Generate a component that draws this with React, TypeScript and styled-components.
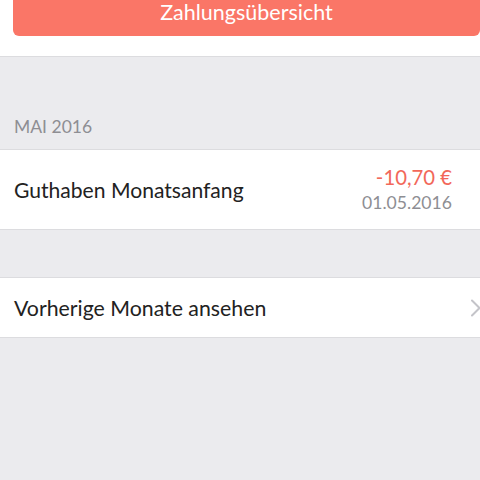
import React from "react"
import styled, { createGlobalStyle } from "styled-components"

const GlobalStyle = createGlobalStyle`
  html, body {
    margin: 0;
    padding: 0;
    background: #ebebee;
    font-family: Lato, "Open Sans", sans-serif;
    -webkit-font-smoothing: antialiased;
  }
`

const entries = [
  { id: 1, title: "Guthaben Monatsanfang", amount: "-10,70 €", date: "01.05.2016" },
]

const Chevron: React.FC = () => (
  <svg width="12" height="18" viewBox="0 0 12 18" fill="none">
    <path d="M2 1.5 L9.5 9 L2 16.5" stroke="#c4c4c9" strokeWidth="2" strokeLinecap="round" strokeLinejoin="round" />
  </svg>
)

export default function App() {
  return (
    <S.Page>
      <GlobalStyle />
      <S.TopSection>
        <S.Button>Zahlungsübersicht</S.Button>
      </S.TopSection>

      <S.SectionHeader>MAI 2016</S.SectionHeader>
      <S.Group>
        {entries.map((e) => (
          <S.Row key={e.id} tall>
            <S.Label>{e.title}</S.Label>
            <S.Values>
              <S.Amount>{e.amount}</S.Amount>
              <S.Date>{e.date}</S.Date>
            </S.Values>
          </S.Row>
        ))}
      </S.Group>

      <S.Spacer />
      <S.Group>
        <S.Row>
          <S.Label wide>Vorherige Monate ansehen</S.Label>
          <S.ChevronWrap>
            <Chevron />
          </S.ChevronWrap>
        </S.Row>
      </S.Group>
    </S.Page>
  )
}

const S = {
  Page: styled.div`
    min-height: 480px;
    background: #ebebee;
    display: flex;
    flex-direction: column;
  `,

  TopSection: styled.div`
    height: 56px;
    background: #fff;
    border-bottom: 1px solid #dcdcdf;
    padding: 0 0 0 13px;
    box-sizing: content-box;
  `,

  Button: styled.div`
    height: 36px;
    background: #fa7667;
    border-radius: 0 0 6px 6px;
    color: #fff;
    font-size: 21.5px;
    display: flex;
    align-items: flex-end;
    justify-content: center;
    padding-bottom: 13px;
    box-sizing: border-box;
    line-height: 22px;
  `,

  SectionHeader: styled.div`
    padding: 60px 14px 12px;
    height: 20px;
    line-height: 20px;
    font-size: 17.5px;
    color: #8e8e93;
  `,

  Group: styled.div`
    background: #fff;
    border-top: 1px solid #dcdcdf;
    border-bottom: 1px solid #dcdcdf;
  `,

  Row: styled.div<{ tall?: boolean }>`
    height: ${(p) => (p.tall ? "79px" : "59px")};
    display: flex;
    align-items: center;
    justify-content: space-between;
    padding: 0 0 0 14px;
  `,

  Label: styled.div<{ wide?: boolean }>`
    font-size: ${(p) => (p.wide ? "21.3px" : "21.1px")};
    color: #222;
  `,

  Values: styled.div`
    display: flex;
    flex-direction: column;
    align-items: flex-end;
    padding-right: 28px;
    gap: 6px;
  `,

  Amount: styled.div`
    font-size: 20.3px;
    line-height: 19px;
    color: #f2685a;
  `,

  Date: styled.div`
    font-size: 17.6px;
    line-height: 19px;
    color: #8e8e93;
  `,

  ChevronWrap: styled.div`
    display: flex;
    align-items: center;
    margin-right: -2px;
  `,

  Spacer: styled.div`
    height: 47px;
  `,
}
